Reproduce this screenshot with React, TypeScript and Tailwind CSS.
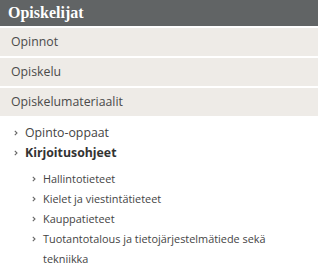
const sections = ["Opinnot", "Opiskelu", "Opiskelumateriaalit"]

const subItems = [
  "Hallintotieteet",
  "Kielet ja viestintätieteet",
  "Kauppatieteet",
  "Tuotantotalous ja tietojärjestelmätiede sekä tekniikka",
]

function Chevron() {
  return (
    <svg width="4" height="6" viewBox="0 0 4 6" className="shrink-0">
      <path d="M0.8 0.8 L3 3 L0.8 5.2" fill="none" stroke="#666" strokeWidth="1.1" />
    </svg>
  )
}

export default function App() {
  return (
    <div className="w-[318px] h-[272px] bg-white overflow-hidden font-['Open_Sans',sans-serif]">
      <div className="h-[26px] bg-[#616465] flex items-center px-2">
        <span className="text-white font-bold text-[16px] font-['Liberation_Serif',serif]">Opiskelijat</span>
      </div>
      <div className="flex flex-col gap-[2px] mt-[2px]">
        {sections.map((s) => (
          <div key={s} className="h-[28px] bg-[#eeebe7] flex items-center px-[11px] text-[12.3px] text-[#4a4a4a]">
            {s}
          </div>
        ))}
      </div>
      <ul className="pt-[7px] text-[12.3px] text-[#444]">
        <li className="flex items-center gap-[7px] pl-[14px] h-[20px]">
          <Chevron />
          <span>Opinto-oppaat</span>
        </li>
        <li className="pl-[14px]">
          <div className="flex items-center gap-[7px] h-[20px]">
            <Chevron />
            <span className="font-bold text-[#333]">Kirjoitusohjeet</span>
          </div>
          <ul className="mt-[6px] pl-[18px] text-[10.9px]">
            {subItems.map((t) => (
              <li key={t} className="flex items-start gap-[7px] leading-[20px]">
                <span className="h-[20px] flex items-center">
                  <Chevron />
                </span>
                <span className="w-[250px]">{t}</span>
              </li>
            ))}
          </ul>
        </li>
      </ul>
    </div>
  )
}
